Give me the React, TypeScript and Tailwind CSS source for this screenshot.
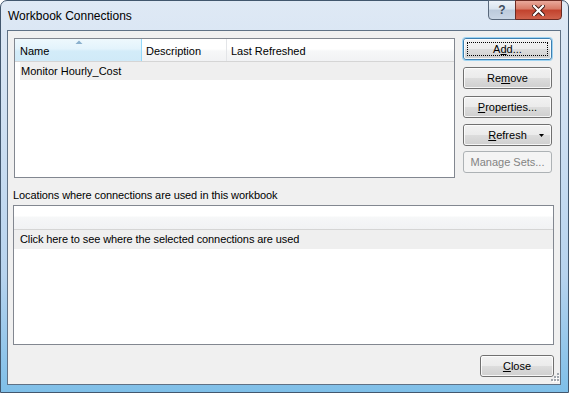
import React from "react";

function Btn({
  children,
  className = "",
  focused = false,
  disabled = false,
  extra,
}: {
  children: React.ReactNode;
  className?: string;
  focused?: boolean;
  disabled?: boolean;
  extra?: React.ReactNode;
}) {
  if (disabled) {
    return (
      <div
        className={`relative flex items-center justify-center rounded-[3px] border border-[#adb2b5] bg-[#f4f4f4] text-[#838383] ${className}`}
      >
        {children}
      </div>
    );
  }
  return (
    <div
      className={`relative flex items-center justify-center rounded-[3px] border ${
        focused ? "border-[#3c7fb1] shadow-[0_0_0_1px_#9fd4f2]" : "border-[#707070]"
      } bg-[linear-gradient(#f2f2f2_0%,#ebebeb_50%,#dddddd_50%,#cfcfcf_100%)] text-black ${className}`}
    >
      <div className="absolute inset-0 rounded-[2px] border border-white/80" />
      {focused && <div className="absolute inset-[3px] border border-dotted border-black" />}
      <span className="relative">{children}</span>
      {extra}
    </div>
  );
}

export default function App() {
  return (
    <div className="w-[569px] h-[393px] overflow-hidden bg-white font-['Liberation_Sans',Arial,sans-serif] text-[11px] text-black">
      <div className="flex h-full w-full flex-col rounded-t-[7px] border border-[#42576e] bg-[linear-gradient(#dfe9f5_0%,#cfe0f2_30%,#b7d3ee_70%,#7fbfe8_100%)]">
        {/* title bar */}
        <div className="relative flex h-[29px] shrink-0 items-center pl-[7px]">
          <span className="text-[12px] text-black">Workbook Connections</span>
          <div className="absolute right-[6px] top-[-1px] flex h-[20px]">
            <div className="flex w-[28px] items-center justify-center rounded-bl-[4px] border border-[#59687b] bg-[linear-gradient(#eef3f9_0%,#d9e3ee_45%,#bccadb_50%,#c9d6e5_100%)]">
              <span className="text-[12px] font-bold text-[#3e4b5c]">?</span>
            </div>
            <div className="-ml-px flex w-[47px] items-center justify-center rounded-br-[4px] border border-[#6b2a22] bg-[linear-gradient(#e9a99b_0%,#d77a66_45%,#c2422d_50%,#d0624c_100%)]">
              <svg width="13" height="11" viewBox="0 0 13 11">
                <path d="M2 1 L11 10 M11 1 L2 10" stroke="#3a1510" strokeWidth="4" strokeLinecap="square" />
                <path d="M2 1 L11 10 M11 1 L2 10" stroke="#ffffff" strokeWidth="2.2" strokeLinecap="square" />
              </svg>
            </div>
          </div>
        </div>

        {/* client area */}
        <div className="ml-[6px] mr-[7px] mb-[7px] flex flex-1 flex-col border border-[#5f7185] bg-[#f0f0f0]">
          <div className="mt-[7px] flex">
            {/* connections list */}
            <div className="ml-[6px] h-[140px] w-[441px] border border-[#828790] bg-white">
              <div className="flex h-[23px] border-b border-[#d5d5d5] bg-[linear-gradient(#ffffff_0%,#ffffff_45%,#f6f7f8_55%,#f1f2f4_100%)]">
                <div className="relative flex w-[127px] items-center border-r border-[#96d9f9] bg-[linear-gradient(#eef8fd_0%,#e3f3fc_45%,#d3ecf9_55%,#d0eaf8_100%)] pl-[5px] pt-[2px]">
                  <svg className="absolute left-[60px] top-[1px]" width="8" height="4" viewBox="0 0 8 4">
                    <path d="M0.5 4 L4 0.5 L7.5 4 Z" fill="#8ab0cd" />
                  </svg>
                  Name
                </div>
                <div className="flex w-[85px] items-center border-r border-[#e3e5e8] pl-[4px] pt-[2px]">Description</div>
                <div className="flex items-center pl-[4px] pt-[2px]">Last Refreshed</div>
              </div>
              <div className="ml-[5px] flex h-[18px] items-center bg-[#efefef] pl-[1px]">Monitor Hourly_Cost</div>
            </div>

            {/* buttons */}
            <div className="ml-[8px] flex w-[89px] flex-col">
              <Btn focused className="h-[22px]">
                A<span className="underline">d</span>d...
              </Btn>
              <Btn className="mt-[7px] h-[22px]">
                Re<span className="underline">m</span>ove
              </Btn>
              <Btn className="mt-[7px] h-[22px]">
                <span className="underline">P</span>roperties...
              </Btn>
              <Btn
                className="mt-[6px] h-[22px]"
                extra={
                  <svg className="absolute right-[7px] top-[9px]" width="5" height="3" viewBox="0 0 5 3">
                    <path d="M0 0 L5 0 L2.5 3 Z" fill="#000" />
                  </svg>
                }
              >
                <span className="underline">R</span>efresh
              </Btn>
              <Btn disabled className="mt-[5px] h-[22px]">
                Manage Sets...
              </Btn>
            </div>
          </div>

          <div className="ml-[5px] mt-[11px] leading-[13px] tracking-[-0.1px]">Locations where connections are used in this workbook</div>

          {/* locations list */}
          <div className="ml-[5px] mt-[3px] h-[140px] w-[541px] border border-[#828790] bg-white">
            <div className="h-[24px] border-b border-[#d5d5d5] bg-[linear-gradient(#ffffff_0%,#ffffff_42%,#f6f7f8_50%,#f1f2f4_100%)]" />
            <div className="flex h-[19px] items-center bg-[#efefef] pl-[6px] tracking-[-0.1px]">Click here to see where the selected connections are used</div>
          </div>

          <div className="relative flex flex-1 items-start justify-end pr-[6px] pt-[10px]">
            <Btn className="h-[22px] w-[74px]">
              <span className="underline">C</span>lose
            </Btn>
            <svg className="absolute bottom-[1px] right-[1px]" width="11" height="11" viewBox="0 0 11 11">
              {[
                [9, 1],
                [9, 4],
                [6, 4],
                [9, 7],
                [6, 7],
                [3, 7],
              ].map(([x, y], i) => (
                <g key={i}>
                  <rect x={x + 1} y={y + 1} width="2" height="2" fill="#ffffff" />
                  <rect x={x} y={y} width="2" height="2" fill="#a0a6ad" />
                </g>
              ))}
            </svg>
          </div>
        </div>
      </div>
    </div>
  );
}
